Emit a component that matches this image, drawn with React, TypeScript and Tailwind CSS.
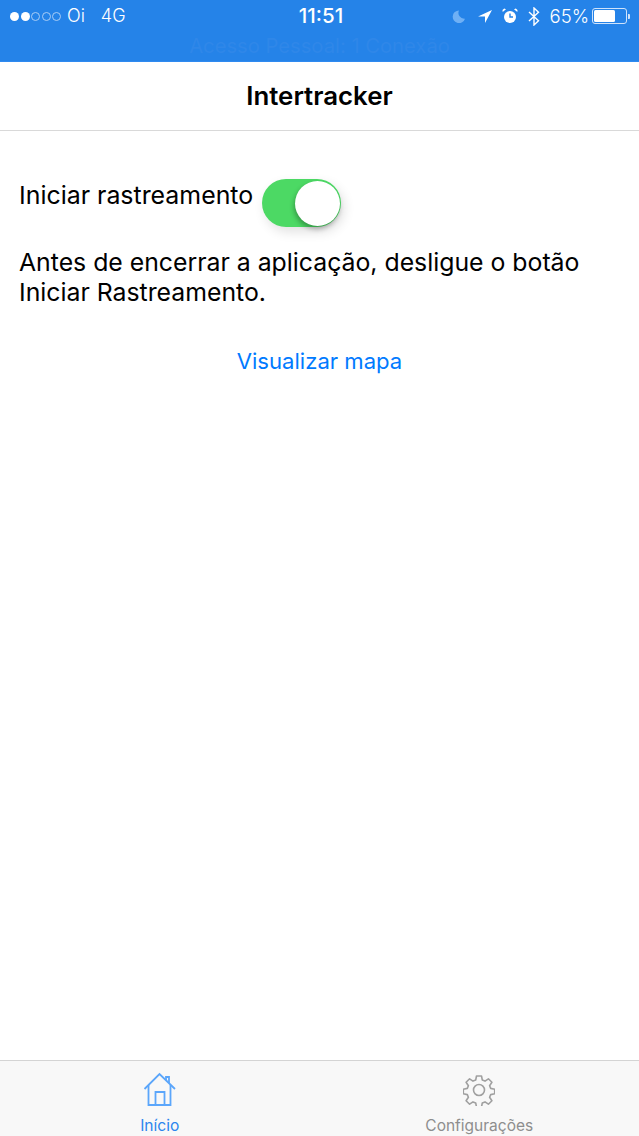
import React from "react";

const Dot = ({ on }: { on?: boolean }) => (
  <span className={on ? "w-[9px] h-[9px] rounded-full bg-white" : "w-[9px] h-[9px] rounded-full border border-[#a9cdf5]"} />
);

export default function App() {
  return (
    <div className="w-[639px] h-[1136px] flex flex-col bg-white overflow-hidden font-['Inter',sans-serif] text-black">
      <div className="relative h-[62px] shrink-0 bg-[#2583e8] border-b border-[#2f8af0]">
        <div className="h-[32px] grid grid-cols-[1fr_auto_1fr] items-center pl-[10px] pr-[9px] text-white">
          <div className="flex items-center">
            <div className="flex gap-[1.5px]">
              <Dot on /><Dot on /><Dot /><Dot /><Dot />
            </div>
            <span className="ml-[6px] text-[18px] font-light leading-none">Oi</span>
            <span className="ml-[16px] text-[18px] font-light leading-none">4G</span>
          </div>
          <span className="ml-[2px] text-[20.5px] font-medium leading-none">11:51</span>
          <div className="flex items-center justify-end gap-[7px]">
            <svg width="15" height="15" viewBox="0 0 15 15" className="mr-[4px]">
              <path d="M8 1.5a6.3 6.3 0 1 0 6 8.2A5.8 5.8 0 0 1 8 1.5z" fill="#6fb0f5" />
            </svg>
            <svg width="16" height="15" viewBox="0 0 16 15">
              <path d="M15 1 1 7.5h7V14z" fill="#fff" />
            </svg>
            <svg width="16" height="16" viewBox="0 0 16 16" className="ml-[2px]">
              <circle cx="8" cy="9" r="6" fill="#fff" />
              <path d="M8 5.5V9h3" stroke="#2583e8" strokeWidth="1.4" fill="none" />
              <path d="M.7 4 4 1.2 2.2.6.5 2zM15.3 4 12 1.2 13.800.6 15.500 2z" fill="#fff" />
            </svg>
            <svg width="12" height="19" viewBox="0 0 12 19" className="ml-[3px]">
              <path d="M1 5l9.5 8.8L6 18V1l4.5 4.2L1 14" stroke="#fff" strokeWidth="1.4" fill="none" />
            </svg>
            <span className="ml-[3px] text-[18.5px] font-light leading-none">65%</span>
            <div className="flex items-center -ml-[4px]">
              <div className="w-[35px] h-[16px] rounded-[3px] border border-[#cfe3fb] p-[1px]">
                <div className="w-[21px] h-full rounded-[1.5px] bg-white" />
              </div>
              <div className="w-[2px] h-[5px] ml-[1px] rounded-r-[1px] bg-[#cfe3fb]" />
            </div>
          </div>
        </div>
        <div className="text-center text-[20.2px] leading-[28px] text-[#2f87e8]">Acesso Pessoal: 1 Conexão</div>
      </div>

      <div className="h-[69px] shrink-0 flex items-center justify-center border-b border-[#d9d9d9]">
        <h1 className="text-[25.8px] font-semibold leading-none">Intertracker</h1>
      </div>

      <main className="flex-1 px-[19px] pt-[48px]">
        <div className="flex items-start h-[48px]">
          <span className="text-[24.9px] leading-[32px]">Iniciar rastreamento</span>
          <div className="relative ml-[9px] w-[79px] h-[48px] rounded-full bg-[#4cd964] shadow-[3px_5px_12px_rgba(0,0,0,0.12)]">
            <div className="absolute right-[1.5px] top-[1.5px] w-[45px] h-[45px] rounded-full bg-white shadow-[-1px_3px_5px_rgba(0,0,0,0.3)]" />
          </div>
        </div>
        <p className="mt-[20px] text-[24.8px] leading-[30px]">
          Antes de encerrar a aplicação, desligue o botão Iniciar Rastreamento.
        </p>
        <div className="mt-[39px] text-center text-[22.1px] leading-[30px] text-[#007aff]">Visualizar mapa</div>
      </main>

      <nav className="h-[76px] shrink-0 grid grid-cols-2 bg-[#f8f8f8] border-t border-[#d4d4d4]">
        <div className="flex flex-col items-center pt-[11px]">
          <svg width="34" height="34" viewBox="0 0 34 34" fill="none" stroke="#5ba6fb" strokeWidth="1.8">
            <path d="M1.5 17 16.5 2 32 17" />
            <path d="M23 8V5h3v6" />
            <path d="M5.5 13V33h22V13" />
            <path d="M12.5 33V20h9v13" />
          </svg>
          <span className="mt-[11px] text-[15.6px] leading-[18px] text-[#2b86ee]">Início</span>
        </div>
        <div className="flex flex-col items-center pt-[13px]">
          <svg width="32" height="32" viewBox="0 0 32 32" fill="none" stroke="#a0a0a0" strokeWidth="1.6" strokeLinejoin="round">
            <circle cx="16" cy="16" r="5.5" />
            <path d="M13.5 2h5l.8 4 2.7 1.1 3.4-2.3 3.5 3.5-2.3 3.4 1.1 2.7 4 .8v4.6l-4 .8-1.1 2.7 2.3 3.4-3.5 3.5-3.4-2.300-2.700 1.100-.8 4h-5l-.8-4-2.700-1.100-3.400 2.300-3.500-3.500 2.300-3.400-1.100-2.700-4-.8v-4.600l4-.8 1.100-2.700-2.300-3.400 3.500-3.500 3.400 2.300 2.700-1.100z" />
          </svg>
          <span className="mt-[11px] text-[15.5px] leading-[18px] text-[#8e8e8e]">Configurações</span>
        </div>
      </nav>
    </div>
  );
}
